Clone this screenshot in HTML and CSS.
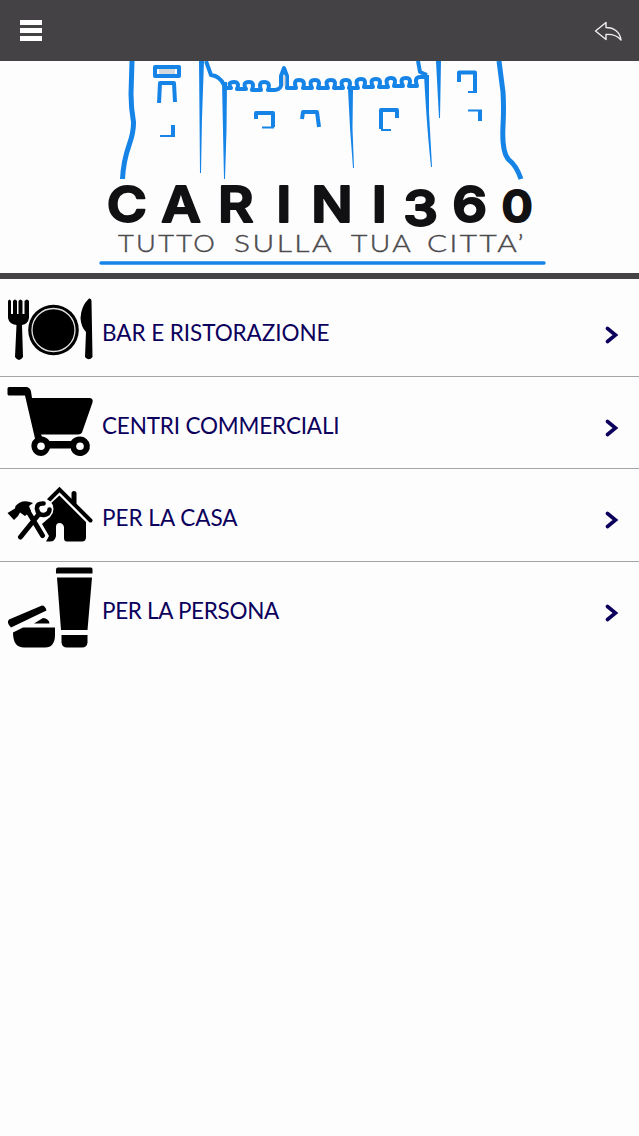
FILE: index.html
```html
<!DOCTYPE html>
<html lang="it">
<head>
    <meta charset="UTF-8">
    <meta name="viewport" content="width=device-width, initial-scale=1.0">
    <title>Carini360</title>
    <link rel="stylesheet" href="styles.css">
</head>
<body>
    <header class="topbar">
        <button class="menu-button" aria-label="Menu">
            <span class="bar"></span>
            <span class="bar"></span>
            <span class="bar"></span>
        </button>
        <button class="back-button" aria-label="Indietro">
            <svg width="28" height="20" viewBox="0 0 28 20">
                <path d="M1.500 10 L12 1.500 V6.500 C20 6.500 26 11 27 19 C23 14.500 18 13 12 13.500 V18.500 Z"/>
            </svg>
        </button>
    </header>

    <section class="logo">
        <svg width="639" height="212" viewBox="0 61 639 212">
            <!-- castle -->
            <g class="castle">
                <path class="thick" d="M132 61 L131 94 Q131 108 133.500 122 C134 143 124 146 122.500 179"/>
                <path class="thick" d="M499 61 L503 92 Q504 108 503 126 C502 145 504 155 509 160 Q516 165 521 179"/>
                <path class="mid" d="M155 67 H179 V76 H155 Z"/>
                <path class="mid" d="M159 103 L160 83 H174 L175 102"/>
                <path class="mid" d="M173 125 V135"/>
                <path class="thin" d="M160 136 H175"/>
                <path class="mid" d="M206 61 L211 75 Q220 76 224 85"/>
                <path class="fill" d="M199 61 H204 L202 118 L201 173 H200 Z"/>
                <path class="fill" d="M222 82 H227 L226.500 130 L225 179 H224 Z"/>
                <path class="battlement" d="M224 88 H231 Q227 82 234 82 Q240 82 237 89 H246 Q242 82 249 82 Q255 82 252 90 H261 Q258 82 264 82 Q271 82 268 90 H275 Q282 89 281 83 V76 L284 68 L287 76 V88 H296 Q293 80 299 80 Q306 80 303 88 H312 Q308 80 315 80 Q321 80 318 88 H328 Q324 80 331 80 Q337 80 334 88 H343 Q339 80 346 80 Q352 80 349 88 H358 Q354 79 361 79 Q367 79 364 87 H373 Q369 79 376 79 Q382 79 379 87 H388 Q384 78 391 78 Q397 78 394 86 H403 Q399 78 406 78 Q412 78 409 86 H417 Q414 77 420 77 H427"/>
                <path class="mid" d="M418 61 L420 72 L427 75"/>
                <path class="fill" d="M424 75 H429 L429 112 L432 167 H431 Q427 130 424 75 Z"/>
                <path class="fill" d="M436 61 H441 L440 118 H439 Z"/>
                <path class="fill" d="M348 89 H353 L352.500 128 L354 168 H353 L350 128 Z"/>
                <path class="mid" d="M256 119 V113 H273 V127"/>
                <path class="thin" d="M262 127.500 H274"/>
                <path class="mid" d="M302 119 L303 112 H317 L319 127"/>
                <path class="mid" d="M397 118 V110 H381 V129"/>
                <path class="thin" d="M381 130 H391"/>
                <path class="mid" d="M459 82 V72.500 H475 V91"/>
                <path class="thin" d="M468 92 H477"/>
                <path class="thin" d="M468 110.500 H482"/>
                <path class="mid" d="M480 111 V121"/>
            </g>
            <rect class="plaque" x="159" y="69" width="16" height="5"/>
            <rect class="plaque" x="283" y="76" width="2.500" height="10"/>

            <text class="brand" transform="scale(1.09 1)" x="98 148 200 253.500 285.500 341 370" y="222.500 222.500 222.500 222.500 222.500 222.500 226">CARINI3<tspan x="415" y="222.500">6</tspan><tspan class="zero" x="460" y="222.500">0</tspan></text>
            <text class="tagline" x="118" y="251.500" textLength="99" lengthAdjust="spacingAndGlyphs">TUTTO</text>
            <text class="tagline" x="234" y="251.500" textLength="100" lengthAdjust="spacingAndGlyphs">SULLA</text>
            <text class="tagline" x="351" y="251.500" textLength="62" lengthAdjust="spacingAndGlyphs">TUA</text>
            <text class="tagline" x="427" y="251.500" textLength="99" lengthAdjust="spacingAndGlyphs">CITTA’</text>
            <path class="underline" d="M101 263 H544"/>
        </svg>
    </section>

    <main class="list">
        <a class="row">
            <svg class="icon" viewBox="0 284 98 92">
                <!-- fork -->
                <path d="M8 301 Q9.500 298 11 301 V314 H13 V301 Q15 298 17 301 V314 H18.500 V301 Q20.500 298 22.500 301 V314 H24.500 V301 Q27 298 29 301 V318 Q28 324 22 325 L23 357 Q19 363 15 357 L16.500 325 Q9 324 8 318 Z"/>
                <circle cx="53.500" cy="330" r="25.300"/>
                <circle class="ring" cx="53.500" cy="330" r="21.500"/>
                <!-- knife -->
                <path d="M89 298.500 Q91.500 298 91.500 301 L92.500 357 Q89 361.500 85 357 L86 332 Q81 327 80.500 318 Q81 306 89 298.500 Z"/>
            </svg>
            <span class="name bar-e">BAR E RISTORAZIONE</span>
            <svg class="chevron" viewBox="0 0 14 18"><path d="M2.500 2.500 L10.500 9 L2.500 15.500"/></svg>
        </a>
        <a class="row">
            <svg class="icon" viewBox="0 376.500 98 92">
                <path d="M9 387.500 H26 Q30 387.500 31 392 L32 398.500 H90 Q93.500 399 92.500 403 L82 433 Q81 435 78 435 H41 L42 437 Q47 437.500 49.500 441.500 H71 Q74 437 80 437 A9.800 9.800 0 1 1 71 450.500 V449 H50 Q47 456.500 41 456.500 A9.900 9.900 0 0 1 35 439 L25 396 H9 Q7.500 396 7.500 394.500 V389 Q7.500 387.500 9 387.500 Z"/>
                <circle class="hole" cx="41" cy="446.800" r="3.800"/>
                <circle class="hole" cx="80" cy="446.800" r="3.800"/>
            </svg>
            <span class="name centri">CENTRI COMMERCIALI</span>
            <svg class="chevron" viewBox="0 0 14 18"><path d="M2.500 2.500 L10.500 9 L2.500 15.500"/></svg>
        </a>
        <a class="row">
            <svg class="icon" viewBox="0 469 98 92">
                <!-- house -->
                <path d="M59.500 493 L86 517 V537 Q86 541.500 82 541.500 H67 Q64 541.500 64 538 V527 Q63 523 59.500 523 Q56 523 56 527 V536 Q55 541.500 50 541.500 H46 L49 536 L42 524 L50 517 L50 501 Z"/>
                <path class="roof-gap" d="M48 504 L59.500 493.500 L90 524"/>
                <path class="roof" d="M49 500 L59.500 489.500 L90.500 520.500"/>
                <path class="chimney" d="M74 493.500 V503"/>
                <!-- hammer and wrench -->
                <path class="outline" d="M43 537 L26 510"/>
                <circle class="outline" cx="43" cy="509" r="6"/>
                <path class="tool" d="M20.500 537 L39 514 M42.500 535.500 L26 508"/>
                <path d="M7.500 513 L15 508.500 L15.500 506 Q22 498.500 33 503 L29 506 L31 511 L25 516 L20 512.500 L18 516 L14 520 Z"/>
                <path class="jaw" d="M43.500 503.500 Q36.500 503 37 509 Q38 515.500 44 515 Q49.500 514 49.500 509.500"/>
            </svg>
            <span class="name casa">PER LA CASA</span>
            <svg class="chevron" viewBox="0 0 14 18"><path d="M2.500 2.500 L10.500 9 L2.500 15.500"/></svg>
        </a>
        <a class="row">
            <svg class="icon" viewBox="0 561.500 98 92">
                <!-- tube -->
                <path d="M58 567 H91 Q92.500 567 92.500 569 V573 H56 V569 Q56 567 58 567 Z"/>
                <path d="M57 577 H92 L87.500 629.500 H61 Z"/>
                <path d="M61.500 634.500 H87.500 V642 Q87 647 82 647 H67 Q62 647 61.500 642 Z"/>
                <!-- cream jar -->
                <path d="M9 619 L42 605 Q45 605 46.500 610 L11 627 Q6 622 9 619 Z"/>
                <path d="M34 623 L43 617.500 Q49 618 49.500 623 Z"/>
                <path d="M13 632 L23 627 H55 V634 Q55 647 45 647 H24 Q13 647 13 632 Z"/>
            </svg>
            <span class="name persona">PER LA PERSONA</span>
            <svg class="chevron" viewBox="0 0 14 18"><path d="M2.500 2.500 L10.500 9 L2.500 15.500"/></svg>
        </a>
    </main>
</body>
</html>
```

FILE: styles.css
```css
:root {
    --dark: #444245;
    --navy: #0b005c;
    --blue: #1584e6;
}

* {
    box-sizing: border-box;
}

body {
    margin: 0;
    min-height: 100vh;
    background-color: #fefdfe;
    font-family: Lato, "Open Sans", sans-serif;
}

button {
    padding: 0;
    border: none;
    background: none;
}

.topbar {
    display: flex;
    align-items: center;
    justify-content: space-between;
    height: 61px;
    padding: 0 17px 0 20px;
    background-color: var(--dark);
}

.menu-button {
    display: flex;
    flex-direction: column;
    gap: 3px;
    width: 22px;
}

.bar {
    height: 5px;
    background-color: white;
}

.back-button svg {
    display: block;
    fill: none;
    stroke: #eeeeee;
    stroke-width: 1.4;
    stroke-linejoin: round;
}

.logo {
    height: 218px;
    border-bottom: 6px solid var(--dark);
}

.logo svg {
    display: block;
}

.castle {
    fill: none;
    stroke: var(--blue);
    stroke-linejoin: round;
}

.castle .thick { stroke-width: 5; }
.castle .mid { stroke-width: 4; }
.castle .thin { stroke-width: 2; }
.castle .battlement { stroke-width: 4; }

.castle .fill {
    fill: var(--blue);
    stroke: none;
}

.plaque {
    fill: #d5d8dc;
}

.brand {
    font-family: Inter, sans-serif;
    font-size: 50px;
    font-weight: 600;
    fill: #111013;
    stroke: #111013;
    stroke-width: 2;
    stroke-linejoin: round;
}

.brand .zero {
    font-size: 43.5px;
}

.tagline {
    font-size: 24px;
    font-weight: 300;
    letter-spacing: 2px;
    fill: #4b494c;
    stroke: #4b494c;
    stroke-width: 0.4;
}

.underline {
    stroke: var(--blue);
    stroke-width: 3.4;
    stroke-linecap: round;
}

.list {
    padding-top: 5px;
}

.row {
    display: flex;
    align-items: center;
    height: 92.5px;
    padding-right: 20px;
    border-bottom: 1px solid #a5a4a8;
    color: var(--navy);
}

.row:last-child {
    border-bottom: none;
}

.icon {
    flex: none;
    width: 98px;
    height: 92px;
    fill: black;
}

.ring,
.roof,
.roof-gap,
.chimney,
.tool,
.jaw,
.outline {
    fill: none;
    stroke: black;
    stroke-linecap: round;
}

.ring {
    stroke: #e2e2e2;
    stroke-width: 1.3;
}

.hole {
    fill: white;
}

.roof { stroke-width: 4; }
.chimney { stroke-width: 5; }
.tool { stroke-width: 5; }
.jaw { stroke-width: 4.6; }

.roof-gap {
    stroke: white;
    stroke-width: 3;
}

.outline {
    stroke: white;
    stroke-width: 9;
}

.name {
    flex: 1;
    padding: 7px 0 0 4px;
    font-size: 22.5px;
    line-height: 28px;
    white-space: nowrap;
}

.bar-e { letter-spacing: -0.07px; }
.centri { letter-spacing: -0.17px; }
.persona { letter-spacing: -0.32px; }

.chevron {
    width: 14px;
    height: 18px;
    margin-top: 11px;
    fill: none;
    stroke: var(--navy);
    stroke-width: 3.6;
    stroke-linecap: round;
}
```
